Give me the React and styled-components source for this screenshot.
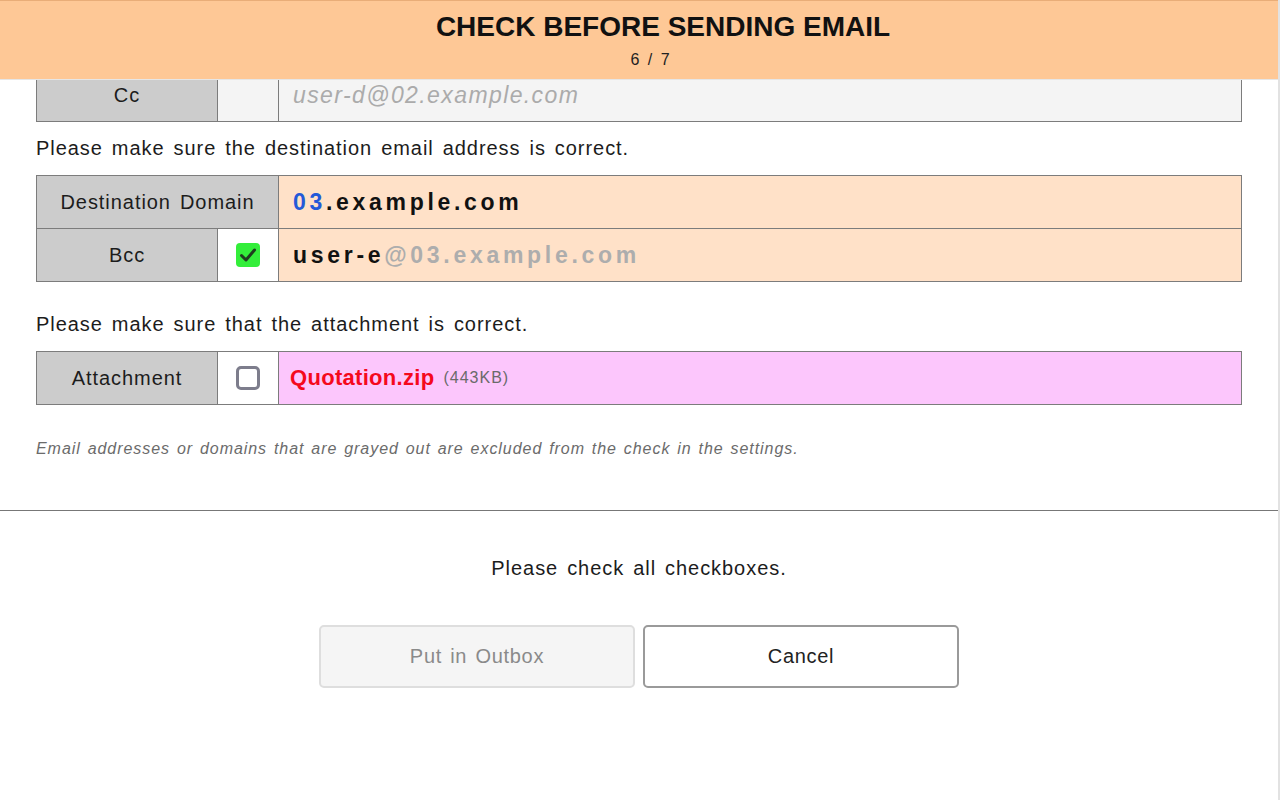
import React from 'react';
import styled, { createGlobalStyle } from 'styled-components';

const GlobalStyle = createGlobalStyle`
  html, body {
    margin: 0;
    padding: 0;
    background: #ffffff;
  }
  body {
    font-family: "Liberation Sans", Arial, sans-serif;
    color: #222222;
  }
`;

const Page = styled.div`
  position: relative;
  min-height: 800px;
  box-sizing: border-box;
  border-right: 2px solid #e2e2e2;
`;

const Header = styled.header`
  position: fixed;
  top: 0;
  left: 0;
  right: 2px;
  height: 80px;
  box-sizing: border-box;
  background: #fec896;
  border-top: 1px solid #e9ad78;
  border-bottom: 1px solid #e6e6e6;
  display: flex;
  flex-direction: column;
  align-items: center;
  padding: 9px 0 0 24px;
  z-index: 10;
`;

const Title = styled.h1`
  margin: 0 0 0 24px;
  font-size: 28px;
  line-height: 34px;
  font-weight: 700;
  color: #111111;
`;

const Counter = styled.div`
  margin-top: 6px;
  font-size: 16px;
  line-height: 20px;
  letter-spacing: 2px;
  color: #222222;
`;

const Content = styled.main`
  padding: 68px 36px 0;
`;

const Grid = styled.div`
  display: grid;
  grid-template-columns: 181px 61px 1fr;
  border-top: 1px solid #7c7c7c;
  border-left: 1px solid #7c7c7c;
`;

const Cell = styled.div`
  height: 53px;
  box-sizing: border-box;
  border-right: 1px solid #7c7c7c;
  border-bottom: 1px solid #7c7c7c;
  display: flex;
  align-items: center;
`;

const Label = styled(Cell)`
  grid-column: ${p => (p.wide ? 'span 2' : 'span 1')};
  justify-content: center;
  background: #cccccc;
  font-size: 20px;
  letter-spacing: 0.95px;
  word-spacing: 2.5px;
  color: #1c1c1c;
`;

const CheckCell = styled(Cell)`
  justify-content: center;
  background: ${p => (p.muted ? '#f4f4f4' : '#ffffff')};
`;

const Value = styled(Cell)`
  padding-left: ${p => p.pad || 14}px;
  background: ${p => p.bg};
  white-space: nowrap;
`;

const Muted = styled.span`
  font-size: 23px;
  font-style: italic;
  letter-spacing: 1.4px;
  color: #ababab;
`;

const Addr = styled.span`
  font-size: 23px;
  font-weight: 700;
  letter-spacing: 3.7px;
  color: ${p => p.color || '#111111'};
`;

const FileName = styled.span`
  font-size: 22px;
  font-weight: 700;
  letter-spacing: 0.3px;
  color: #f5091c;
`;

const FileSize = styled.span`
  margin-left: 9px;
  font-size: 16px;
  letter-spacing: 1px;
  color: #6a6a6a;
`;

const Notice = styled.p`
  margin: ${p => p.top || 11}px 0 12px;
  font-size: 20px;
  line-height: 30px;
  letter-spacing: 0.95px;
  word-spacing: 2.5px;
  color: #1c1c1c;
`;

const Hint = styled.p`
  margin: 32px 0 0;
  padding-bottom: 49px;
  font-size: 16px;
  line-height: 24px;
  font-style: italic;
  letter-spacing: 0.95px;
  word-spacing: 1.5px;
  color: #6b6b6b;
`;

const Footer = styled.footer`
  border-top: 1px solid #777777;
  padding-top: 42px;
  display: flex;
  flex-direction: column;
  align-items: center;
`;

const Status = styled.div`
  font-size: 20px;
  line-height: 30px;
  letter-spacing: 0.95px;
  word-spacing: 2.5px;
  color: #1c1c1c;
`;

const Buttons = styled.div`
  margin-top: 42px;
  display: flex;
  gap: 8px;
`;

const Button = styled.button`
  width: 316px;
  height: 63px;
  box-sizing: border-box;
  border-radius: 5px;
  border: 2px solid ${p => (p.disabled ? '#dedede' : '#9a9a9a')};
  background: ${p => (p.disabled ? '#f5f5f5' : '#ffffff')};
  color: ${p => (p.disabled ? '#8a8a8a' : '#222222')};
  font-family: "Liberation Sans", Arial, sans-serif;
  font-size: 20px;
  letter-spacing: 0.7px;
  word-spacing: 2px;
  cursor: ${p => (p.disabled ? 'default' : 'pointer')};
`;

const BoxOn = styled.span`
  width: 24px;
  height: 24px;
  border-radius: 4px;
  background: #33ee3a;
  display: flex;
  align-items: center;
  justify-content: center;
`;

const BoxOff = styled.span`
  width: 24px;
  height: 24px;
  box-sizing: border-box;
  border-radius: 5px;
  border: 3px solid #7d7d8c;
  background: #ffffff;
`;

const Check = ({ checked }) =>
  checked ? (
    <BoxOn>
      <svg width="18" height="16" viewBox="0 0 18 16">
        <path d="M2.5 8.5 L7 13 L15.5 3" fill="none" stroke="#1f3d1f" strokeWidth="3" strokeLinecap="round" strokeLinejoin="round" />
      </svg>
    </BoxOn>
  ) : (
    <BoxOff />
  );

const App = () => {
  return (
    <Page>
      <GlobalStyle />
      <Header>
        <Title>CHECK BEFORE SENDING EMAIL</Title>
        <Counter>6 / 7</Counter>
      </Header>
      <Content>
        <Grid>
          <Label>Cc</Label>
          <CheckCell muted />
          <Value bg="#f4f4f4">
            <Muted>user-d@02.example.com</Muted>
          </Value>
        </Grid>

        <Notice>Please make sure the destination email address is correct.</Notice>
        <Grid>
          <Label wide>Destination Domain</Label>
          <Value bg="#ffe1c8">
            <Addr color="#2459d8">03</Addr>
            <Addr>.example.com</Addr>
          </Value>
          <Label>Bcc</Label>
          <CheckCell>
            <Check checked />
          </CheckCell>
          <Value bg="#ffe1c8">
            <Addr>user-e</Addr>
            <Addr color="#adadad">@03.example.com</Addr>
          </Value>
        </Grid>

        <Notice top={27}>Please make sure that the attachment is correct.</Notice>
        <Grid>
          <Label>Attachment</Label>
          <CheckCell>
            <Check />
          </CheckCell>
          <Value bg="#fcc6fc" pad={11}>
            <FileName>Quotation.zip</FileName>
            <FileSize>(443KB)</FileSize>
          </Value>
        </Grid>

        <Hint>Email addresses or domains that are grayed out are excluded from the check in the settings.</Hint>
      </Content>
      <Footer>
        <Status>Please check all checkboxes.</Status>
        <Buttons>
          <Button disabled>Put in Outbox</Button>
          <Button>Cancel</Button>
        </Buttons>
      </Footer>
    </Page>
  );
};

export default App;
